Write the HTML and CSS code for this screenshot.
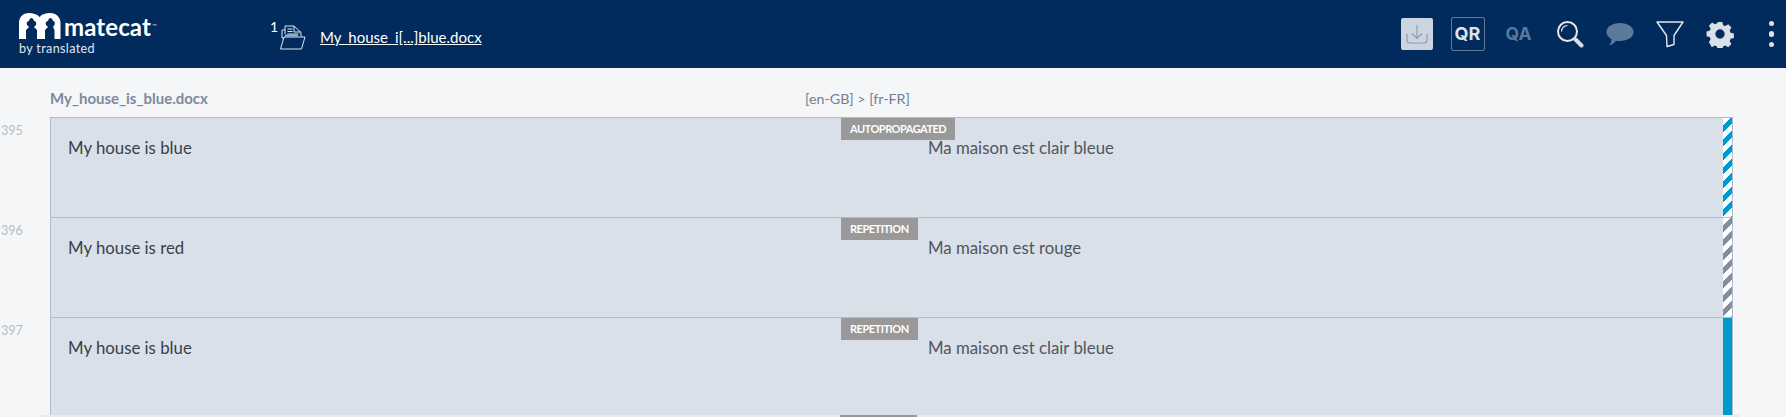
FILE: index.html
```html
<!DOCTYPE html>
<html lang="en">
<head>
<meta charset="utf-8">
<title>Matecat</title>
<link rel="stylesheet" href="styles.css">
</head>
<body>
<header class="topbar">
  <div class="logo">
    <div class="logo-main">
      <svg class="logo-mark" width="42" height="26" viewBox="0 0 42 26">
        <path fill="#fff" d="M0 26V10C0 4 4 0 10 0c4 0 8 1 10.500 4C23 1 27 0 31 0c6 0 10.500 4 10.500 10v16z"/>
        <path fill="#002b5c" d="M7 26V17l3-3-2-2c-1-3 1-4 2-4 .5-2 1.500-3 2.500-3s2 1 2.500 3c1 0 3 1 2 4l-2 2 3 3v9z"/>
        <path fill="#002b5c" d="M26 26V17l3-3-2-2c-1-3 1-4 2-4 .5-2 1.500-3 2.500-3s2 1 2.500 3c1 0 2.500 1 1.500 4l-1.500 2 1.500 3v9z"/>
      </svg>
      <span class="logo-word">matecat</span><span class="logo-tm">™</span>
    </div>
    <div class="logo-sub">by translated</div>
  </div>
  <div class="file-info">
    <span class="file-count">1</span>
    <svg class="folder" width="26" height="25" viewBox="0 0 26 25" fill="none" stroke="#dfe6ee" stroke-width="1">
      <path d="M5 9V1h9l7 6.500v4"/>
      <path d="M14 1v6h7"/>
      <path d="M7.500 4h5M7.500 6.500h5M7.500 9h11"/>
      <path d="M2 13V5h3M2 13h2"/>
      <path d="M4 12h21l-3.500 12H.5z"/>
      <path d="M5 10.500h13" stroke-width="2" stroke="#9fb0c4"/>
    </svg>
    <a class="file-link" href="#">My_house_i[...]blue.docx</a>
  </div>
  <nav class="actions">
    <button class="tool tool-download" type="button" aria-label="Download">
      <svg width="22" height="22" viewBox="0 0 22 22" fill="none" stroke="#8c9db2" stroke-width="1.200">
        <path d="M1 11v6c0 2 1 3 3 3h14c2 0 3-1 3-3v-6"/>
        <path d="M11 2v13M6 10.500l5 5 5-5"/>
      </svg>
    </button>
    <span class="tool tool-qr">QR</span>
    <span class="tool tool-qa">QA</span>
    <svg class="tool-icon" width="28" height="28" viewBox="0 0 28 28" fill="none">
      <circle cx="11.500" cy="11.500" r="9.500" stroke="#e4e9ef" stroke-width="2"/>
      <path d="M5.500 11.500a6 6 0 0 1 6-6" stroke="#e4e9ef" stroke-width="1.200"/>
      <path d="M19.500 19.500l6 6" stroke="#d7dee7" stroke-width="4" stroke-linecap="round"/>
    </svg>
    <svg class="tool-icon" width="28" height="24" viewBox="0 0 28 24">
      <path fill="#5b7a9b" d="M14 1c7.500 0 13.500 3.500 13.500 9S21.500 19 14 19c-1.500 0-3 0-4-.3C8 21 5.500 23 3 23.500c1.500-1.500 2.500-4 2.500-6.300C2.500 15.500.5 13 .5 10 .5 4.500 6.500 1 14 1z"/>
    </svg>
    <svg class="tool-icon" width="28" height="28" viewBox="0 0 28 28" fill="none">
      <path d="M1 2h26L18 15.500v9L11 26.500 10.500 15.500z" stroke="#e4e9ef" stroke-width="1.400" stroke-linejoin="round"/>
    </svg>
    <svg class="tool-icon" width="28" height="28" viewBox="0 0 28 28">
      <path fill="#d9e0e8" fill-rule="evenodd" d="M11.500 1h5l.8 3.500 2.500 1 3-1.900 3.500 3.500-1.900 3 1 2.500 3.500.8v5l-3.500.8-1 2.500 1.900 3-3.500 3.500-3-1.900-2.500 1-.8 3.500h-5l-.8-3.500-2.500-1-3 1.900L2 22.700l1.900-3-1-2.500L-.5 16.400v-5l3.400-.8 1-2.500L2 5.100 5.500 1.600l3 1.900 2.500-1zM14 9a5 5 0 1 0 0 10 5 5 0 0 0 0-10z" transform="translate(1 1) scale(.93)"/>
    </svg>
    <span class="dots"><i></i><i></i><i></i></span>
  </nav>
</header>

<main class="page">
  <div class="file-head">
    <span class="file-title">My_house_is_blue.docx</span>
    <span class="langs">[en-GB] &gt; [fr-FR]</span>
  </div>

  <section class="segments">
    <article class="segment">
      <span class="seg-num">395</span>
      <div class="seg-body">
        <div class="source">My house is blue</div>
        <div class="target">Ma maison est clair bleue</div>
        <span class="badge">AUTOPROPAGATED</span>
        <div class="status status-auto"></div>
      </div>
    </article>
    <article class="segment">
      <span class="seg-num">396</span>
      <div class="seg-body">
        <div class="source">My house is red</div>
        <div class="target">Ma maison est rouge</div>
        <span class="badge">REPETITION</span>
        <div class="status status-draft"></div>
      </div>
    </article>
    <article class="segment segment-last">
      <span class="seg-num">397</span>
      <div class="seg-body">
        <div class="source">My house is blue</div>
        <div class="target">Ma maison est clair bleue</div>
        <span class="badge">REPETITION</span>
        <div class="status status-done"></div>
      </div>
    </article>
  </section>
  <div class="footer-strip"><span class="next-badge"></span></div>
</main>
</body>
</html>
```
FILE: styles.css
```css
* { box-sizing: border-box; }
html, body { margin: 0; padding: 0; }
body {
  width: 1786px;
  height: 417px;
  overflow: hidden;
  background: #f4f6f8;
  font-family: "Lato", "Liberation Sans", sans-serif;
}
.topbar {
  height: 68px;
  background: #002b5c;
  display: flex;
  align-items: center;
  color: #fff;
  padding-left: 19px;
}
.logo { width: 251px; margin-top: 0; }
.logo-main { display: flex; align-items: flex-end; height: 26px; }
.logo-mark { display: block; flex: none; }
.logo-word {
  font: 700 24px/24px "Lato", sans-serif;
  margin-left: 3px;
  height: 24px;
  letter-spacing: .1px;
}
.logo-tm { font-size: 6px; line-height: 22px; height: 24px; margin-left: 1px; color: #c8d2dd; }
.logo-sub { font-size: 12.600px; line-height: 14px; margin-top: 3px; color: #e3e8ee; letter-spacing: .35px; }
.file-info { display: flex; align-items: center; }
.file-count { font-size: 14px; line-height: 14px; width: 10px; margin-top: -14px; }
.folder { margin-top: 7px; }
.file-link { color: #fff; font-size: 15px; line-height: 18px; margin-left: 14px; margin-top: 5px; text-decoration: underline; }
.actions {
  margin-left: auto;
  display: flex;
  align-items: center;
  height: 68px;
}
.tool { display: flex; align-items: center; justify-content: center; flex: none; }
.tool-download {
  width: 32px; height: 32px; padding: 0; border: 0; border-radius: 2px;
  background: #ccd5df;
  margin-right: 18px;
}
.tool-qr {
  width: 34px; height: 34px;
  border: 1.500px solid #5d7a9b; border-radius: 2px;
  font: 700 18px/1 "Inter", sans-serif;
  color: #dde3ea;
  margin-right: 20px;
}
.tool-qa {
  font: 700 17.500px/1 "Inter", sans-serif;
  color: #5b7a9b;
  width: 28px;
  margin-right: 23px;
}
.tool-icon { display: block; flex: none; margin-right: 22px; }
.dots { display: flex; flex-direction: column; gap: 5px; margin: 0 12px 0 13px; }
.dots i { display: block; width: 5.500px; height: 5.500px; border-radius: 50%; background: #dde3ea; }

.page { display: block; }
.file-head {
  height: 49px;
  padding: 22px 0 0 50px;
  display: flex;
  font-size: 14px;
  line-height: 18px;
  color: #7e8a9c;
}
.file-title { width: 755px; font-weight: 700; font-size: 15px; line-height: 16px; }
.langs { font-size: 14.300px; color: #737f92; }
.segment { position: relative; height: 100px; padding-left: 50px; }
.segment-last { height: 98px; }
.seg-num {
  position: absolute; left: 1px; top: 6px;
  font-size: 12.500px; line-height: 16px; color: #b7bcc3;
}
.seg-body {
  position: relative;
  display: flex;
  width: 1683px;
  height: 100%;
  background: #d9e0e9;
  border-top: 1px solid #adbccf;
  border-left: 1px solid #adbccf;
  border-right: 1px solid #adbccf;
  font-size: 16.800px;
  line-height: 20px;
  padding-top: 20px;
}
.source { width: 860px; padding-left: 17px; color: #3a4049; }
.target { color: #50565f; padding-left: 17px; }
.badge {
  position: absolute; left: 790px; top: 0;
  height: 22px; padding: 0 9px;
  background: #999;
  color: #fff;
  font-size: 11px; letter-spacing: -.5px; font-weight: 700; line-height: 22px;
}
.status { position: absolute; top: 0; right: 0; bottom: 0; width: 9px; }
.status-auto { background: repeating-linear-gradient(135deg, #fff 0 5px, #0099cc 5px 10px); }
.status-draft { background: repeating-linear-gradient(135deg, #fff 0 5px, #868c9c 5px 10px); }
.status-done { background: #0099cc; }
.footer-strip {
  position: relative;
  height: 2px;
  margin: 0 46px 0 41px;
  background: #e8ebef;
}
.next-badge { position: absolute; left: 799px; top: 0; width: 77px; height: 2px; background: #999; }
```
